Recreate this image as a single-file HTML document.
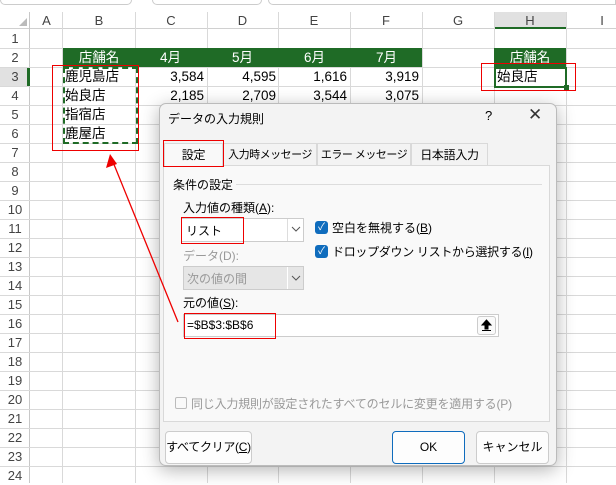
<!DOCTYPE html>
<html><head><meta charset="utf-8"><style>
*{box-sizing:border-box;margin:0;padding:0;white-space:nowrap}
body{width:616px;height:483px;overflow:hidden;background:#fff;position:relative;font-family:"Liberation Sans","Noto Sans CJK JP",sans-serif;color:#000}
.a{position:absolute}
.vl{position:absolute;top:12px;bottom:0;width:1px;background:#d9d9d9}
.hl{position:absolute;left:0;right:0;height:1px;background:#d9d9d9}
.ch{position:absolute;top:12px;height:17px;font-size:13px;color:#444;text-align:center;line-height:17px}
.rn{position:absolute;left:0;width:30px;text-align:center;font-size:13px;color:#444;height:19px;line-height:19px}
.c{position:absolute;height:19px;line-height:19px;font-size:13.5px}
.g{background:#1f6b26;color:#fff}
.d{font-size:12px}
.tab{position:absolute;top:143px;height:22px;border:1px solid #d9d9d9;border-bottom:none;background:#f3f3f3;font-size:12px;text-align:center;line-height:22px;overflow:hidden;letter-spacing:-0.3px}
.btn{position:absolute;top:431px;height:33px;border:1px solid #ccc;border-radius:4px;background:#fdfdfd;font-size:12px;text-align:center;line-height:31px}
.cb{position:absolute;width:13px;height:13px;border-radius:3px;background:#0f6cbd;color:#fff;font-size:10px;line-height:13px;text-align:center}
</style></head><body>
<div class="a" style="left:0;top:0;width:132px;height:5px;border:1px solid #ccc;border-top:none;border-radius:0 0 5px 5px"></div>
<div class="a" style="left:152px;top:0;width:110px;height:5px;border:1px solid #ccc;border-top:none;border-radius:0 0 5px 5px"></div>
<div class="a" style="left:268px;top:0;width:348px;height:5px;border:1px solid #ccc;border-top:none;border-radius:0 0 0 5px"></div>
<div class="a" style="left:0;top:12px;width:616px;height:17px;background:#fff;border-bottom:1px solid #d0d0d0"></div>
<div class="a" style="left:494px;top:12px;width:72px;height:17px;background:#e1e1e1;border-bottom:2px solid #1f6b26"></div>
<div class="a" style="left:0;top:12px;width:30px;bottom:0;border-right:1px solid #c8c8c8"></div>
<div class="a" style="left:27px;top:67px;width:3px;height:19px;background:#1f6b26"></div>
<div class="a" style="left:0;top:67px;width:27px;height:19px;background:#e1e1e1"></div>
<svg class="a" style="left:18px;top:17px" width="10" height="10"><path d="M9 1V9H1Z" fill="#bbb"/></svg>
<div class="vl" style="left:62px"></div><div class="vl" style="left:135px"></div><div class="vl" style="left:207px"></div><div class="vl" style="left:278px"></div><div class="vl" style="left:350px"></div><div class="vl" style="left:422px"></div><div class="vl" style="left:494px"></div><div class="vl" style="left:566px"></div>
<div class="hl" style="top:48px"></div><div class="hl" style="top:67px"></div><div class="hl" style="top:86px"></div><div class="hl" style="top:105px"></div><div class="hl" style="top:124px"></div><div class="hl" style="top:143px"></div><div class="hl" style="top:162px"></div><div class="hl" style="top:181px"></div><div class="hl" style="top:200px"></div><div class="hl" style="top:219px"></div><div class="hl" style="top:238px"></div><div class="hl" style="top:257px"></div><div class="hl" style="top:276px"></div><div class="hl" style="top:295px"></div><div class="hl" style="top:314px"></div><div class="hl" style="top:333px"></div><div class="hl" style="top:352px"></div><div class="hl" style="top:371px"></div><div class="hl" style="top:390px"></div><div class="hl" style="top:409px"></div><div class="hl" style="top:428px"></div><div class="hl" style="top:447px"></div><div class="hl" style="top:466px"></div>
<div class="ch" style="left:30px;width:33px">A</div><div class="ch" style="left:63px;width:72px">B</div><div class="ch" style="left:135px;width:72px">C</div><div class="ch" style="left:207px;width:71px">D</div><div class="ch" style="left:278px;width:72px">E</div><div class="ch" style="left:350px;width:72px">F</div><div class="ch" style="left:422px;width:72px">G</div><div class="ch" style="left:494px;width:72px">H</div><div class="ch" style="left:566px;width:72px">I</div>
<div class="rn" style="top:29px">1</div><div class="rn" style="top:48px">2</div><div class="rn" style="top:67px">3</div><div class="rn" style="top:86px">4</div><div class="rn" style="top:105px">5</div><div class="rn" style="top:124px">6</div><div class="rn" style="top:143px">7</div><div class="rn" style="top:162px">8</div><div class="rn" style="top:181px">9</div><div class="rn" style="top:200px">10</div><div class="rn" style="top:219px">11</div><div class="rn" style="top:238px">12</div><div class="rn" style="top:257px">13</div><div class="rn" style="top:276px">14</div><div class="rn" style="top:295px">15</div><div class="rn" style="top:314px">16</div><div class="rn" style="top:333px">17</div><div class="rn" style="top:352px">18</div><div class="rn" style="top:371px">19</div><div class="rn" style="top:390px">20</div><div class="rn" style="top:409px">21</div><div class="rn" style="top:428px">22</div><div class="rn" style="top:447px">23</div><div class="rn" style="top:466px">24</div>
<div class="c g" style="left:63px;top:48px;width:359px"></div>
<div class="c g" style="left:63px;top:48px;width:72px;text-align:center">店舗名</div>
<div class="c g" style="left:160px;top:48px">4月</div><div class="c g" style="left:232px;top:48px">5月</div><div class="c g" style="left:304px;top:48px">6月</div><div class="c g" style="left:376px;top:48px">7月</div>
<div class="c g" style="left:494px;top:48px;width:72px;text-align:center">店舗名</div>
<div class="c" style="left:65px;top:67px">鹿児島店</div><div class="c" style="left:65px;top:86px">始良店</div><div class="c" style="left:65px;top:105px">指宿店</div><div class="c" style="left:65px;top:124px">鹿屋店</div>
<div class="c" style="left:135px;top:67px;width:69px;text-align:right">3,584</div><div class="c" style="left:207px;top:67px;width:69px;text-align:right">4,595</div><div class="c" style="left:278px;top:67px;width:69px;text-align:right">1,616</div><div class="c" style="left:350px;top:67px;width:69px;text-align:right">3,919</div>
<div class="c" style="left:135px;top:86px;width:69px;text-align:right">2,185</div><div class="c" style="left:207px;top:86px;width:69px;text-align:right">2,709</div><div class="c" style="left:278px;top:86px;width:69px;text-align:right">3,544</div><div class="c" style="left:350px;top:86px;width:69px;text-align:right">3,075</div>
<div class="a" style="left:494px;top:67px;width:73px;height:21px;border:2px solid #1f6b26"></div>
<div class="a" style="left:564px;top:85px;width:5px;height:5px;background:#1f6b26"></div>
<div class="c" style="left:497px;top:67px">始良店</div>
<div class="a" style="left:63px;top:67px;width:75px;height:77px;border:2px dashed #1f6b26"></div>
<div class="a" style="left:52px;top:65px;width:87px;height:86px;border:1px solid #e00"></div>
<div class="a" style="left:481px;top:63px;width:95px;height:28px;border:1px solid #e00"></div>
<div class="a" style="left:159px;top:103px;width:398px;height:363px;background:#f3f3f3;border:1px solid #bbb;border-radius:7px;box-shadow:0 4px 18px rgba(0,0,0,.3)"></div>
<div class="a d" style="left:168px;top:110px">データの入力規則</div>
<div class="a" style="left:485px;top:108px;font-size:13px">?</div>
<div class="a" style="left:528px;top:105px;font-size:17px;color:#333">✕</div>
<div class="a" style="left:163px;top:165px;width:387px;height:257px;background:#f9f9f9;border:1px solid #d9d9d9"></div>
<div class="tab" style="left:164px;width:59px;background:#f9f9f9;height:24px">設定</div>
<div class="tab" style="left:223px;width:94px;font-size:11px;letter-spacing:-0.5px">入力時メッセージ</div>
<div class="tab" style="left:317px;width:94px;font-size:11px;letter-spacing:-0.5px">エラー メッセージ</div>
<div class="tab" style="left:411px;width:77px">日本語入力</div>
<div class="a" style="left:163px;top:140px;width:61px;height:27px;border:1px solid #e00"></div>
<div class="a d" style="left:173px;top:176px">条件の設定</div>
<div class="a" style="left:236px;top:184px;width:306px;height:1px;background:#ddd"></div>
<div class="a d" style="left:183px;top:199px">入力値の種類(<u>A</u>):</div>
<div class="a" style="left:181px;top:218px;width:123px;height:24px;background:#fff;border:1px solid #ccc"></div>
<div class="a" style="left:287px;top:219px;width:1px;height:22px;background:#ddd"></div>
<svg class="a" style="left:290px;top:224px" width="12" height="10"><path d="M2 3L6 7L10 3" fill="none" stroke="#555"/></svg>
<div class="a d" style="left:186px;top:222px">リスト</div>
<div class="a" style="left:181px;top:217px;width:63px;height:27px;border:1px solid #e00"></div>
<div class="cb" style="left:315px;top:221px">✓</div><div class="a d" style="left:332px;top:219px">空白を無視する(<u>B</u>)</div>
<div class="cb" style="left:315px;top:245px">✓</div><div class="a d" style="left:332px;top:243px;letter-spacing:-0.3px">ドロップダウン リストから選択する(<u>I</u>)</div>
<div class="a d" style="left:183px;top:247px;color:#999">データ(D):</div>
<div class="a" style="left:183px;top:266px;width:121px;height:24px;background:#e6e6e6;border:1px solid #ccc"></div>
<div class="a" style="left:287px;top:267px;width:1px;height:22px;background:#fff"></div>
<svg class="a" style="left:290px;top:273px" width="12" height="10"><path d="M2 3L6 7L10 3" fill="none" stroke="#555"/></svg>
<div class="a d" style="left:187px;top:270px;color:#999">次の値の間</div>
<div class="a d" style="left:183px;top:294px">元の値(<u>S</u>):</div>
<div class="a" style="left:183px;top:314px;width:316px;height:23px;background:#fff;border:1px solid #ccc"></div>
<div class="a" style="left:477px;top:316px;width:19px;height:19px;border:1px solid #ccc;border-radius:3px;background:#fafafa"></div>
<svg class="a" style="left:480px;top:319px" width="13" height="13"><path d="M6.5 1L2 6H5V10H8V6H11Z M2 11.5H11" fill="#000" stroke="#000" stroke-width="1"/></svg>
<div class="a d" style="left:187px;top:318px">=$B$3:$B$6</div>
<div class="a" style="left:184px;top:313px;width:92px;height:26px;border:1px solid #e00"></div>
<div class="a" style="left:175px;top:397px;width:12px;height:12px;border:1px solid #bbb;border-radius:2px"></div>
<div class="a d" style="left:191px;top:395px;color:#999;letter-spacing:-0.2px">同じ入力規則が設定されたすべてのセルに変更を適用する(P)</div>
<div class="btn" style="left:165px;width:87px;letter-spacing:-0.3px">すべてクリア(<u>C</u>)</div>
<div class="btn" style="left:392px;width:73px;border:1px solid #0f6cbd">OK</div>
<div class="btn" style="left:476px;width:73px">キャンセル</div>
<svg class="a" style="left:0;top:0" width="616" height="483"><line x1="178" y1="322" x2="113" y2="162" stroke="#e00" stroke-width="1.3"/><path d="M110 154 L106 168 L117 164Z" fill="#e00"/></svg>
</body></html>
